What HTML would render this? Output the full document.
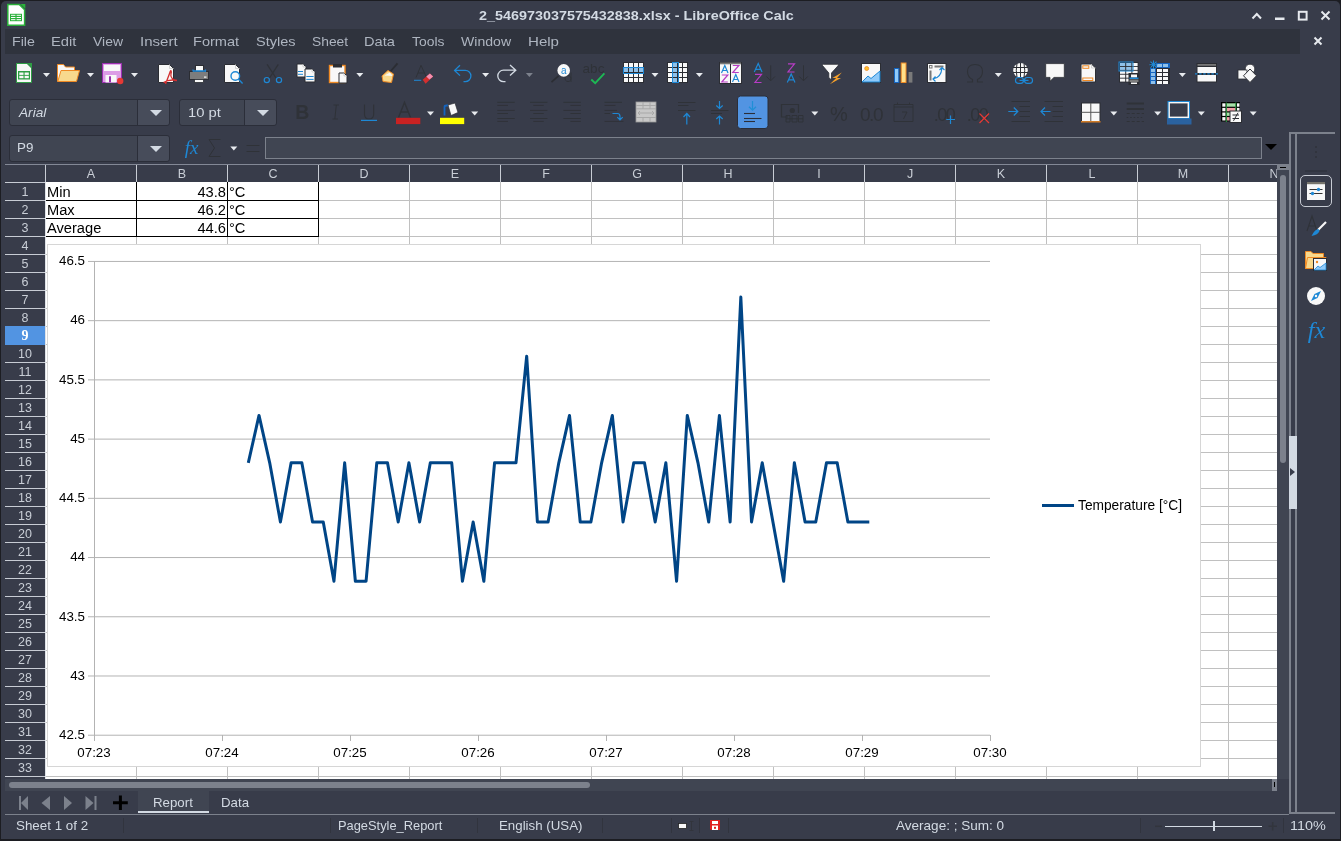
<!DOCTYPE html><html><head><meta charset="utf-8"><style>
*{margin:0;padding:0;box-sizing:border-box}
html,body{width:1341px;height:841px;overflow:hidden;background:#1c1d22}
body{position:relative;font-family:"Liberation Sans",sans-serif;-webkit-font-smoothing:antialiased}
.t{will-change:transform}
.a{position:absolute}
.t{position:absolute;white-space:nowrap;line-height:1}
.ui{font-size:13px;color:#d3dae3}
.menu{font-size:13px;color:#b9c0ca}
.hdr{font-size:12.5px;color:#c9ced6}
.cell{font-size:14.67px;color:#000}
.ch{font-size:13.33px;color:#000}
svg{position:absolute;overflow:visible}
</style></head><body>
<div class="a" style="left:1px;top:1px;width:1339px;height:838px;background:#383c4a;border-radius:5px 5px 0 0"></div>
<div class="a" style="left:5px;top:29px;width:1295px;height:25px;background:#2f333d"></div>
<div class="t" style="left:478.8px;top:10.28px;font-size:12.43px;font-weight:bold;font-style:normal;color:#d3dae3;transform-origin:0 0;transform:scaleX(1.1565)">2_546973037575432838.xlsx - LibreOffice Calc</div>
<div class="t" style="left:12.27px;top:36.26px;font-size:12.57px;font-weight:normal;font-style:normal;color:#aeb5c0;transform-origin:0 0;transform:scaleX(1.1321)">File</div>
<div class="t" style="left:51.03px;top:36.26px;font-size:12.57px;font-weight:normal;font-style:normal;color:#aeb5c0;transform-origin:0 0;transform:scaleX(1.1722)">Edit</div>
<div class="t" style="left:93.0px;top:36.26px;font-size:12.57px;font-weight:normal;font-style:normal;color:#aeb5c0;transform-origin:0 0;transform:scaleX(1.1099)">View</div>
<div class="t" style="left:139.8px;top:36.26px;font-size:12.57px;font-weight:normal;font-style:normal;color:#aeb5c0;transform-origin:0 0;transform:scaleX(1.1963)">Insert</div>
<div class="t" style="left:193.04px;top:36.26px;font-size:12.57px;font-weight:normal;font-style:normal;color:#aeb5c0;transform-origin:0 0;transform:scaleX(1.1605)">Format</div>
<div class="t" style="left:256.0px;top:36.26px;font-size:12.57px;font-weight:normal;font-style:normal;color:#aeb5c0;transform-origin:0 0;transform:scaleX(1.1583)">Styles</div>
<div class="t" style="left:312.3px;top:36.26px;font-size:12.57px;font-weight:normal;font-style:normal;color:#aeb5c0;transform-origin:0 0;transform:scaleX(1.1008)">Sheet</div>
<div class="t" style="left:364.23px;top:36.26px;font-size:12.57px;font-weight:normal;font-style:normal;color:#aeb5c0;transform-origin:0 0;transform:scaleX(1.1664)">Data</div>
<div class="t" style="left:412.0px;top:36.26px;font-size:12.57px;font-weight:normal;font-style:normal;color:#aeb5c0;transform-origin:0 0;transform:scaleX(1.1052)">Tools</div>
<div class="t" style="left:461.1px;top:36.26px;font-size:12.57px;font-weight:normal;font-style:normal;color:#aeb5c0;transform-origin:0 0;transform:scaleX(1.1204)">Window</div>
<div class="t" style="left:527.7px;top:36.26px;font-size:12.57px;font-weight:normal;font-style:normal;color:#aeb5c0;transform-origin:0 0;transform:scaleX(1.1992)">Help</div>
<div class="a" style="left:9px;top:99px;width:161px;height:27px;background:#404552;border:1px solid #2b2e39;border-radius:3px"></div>
<div class="a" style="left:137px;top:100px;width:32px;height:25px;background:#474c5a;border-left:1px solid #2b2e39;border-radius:0 3px 3px 0"></div>
<svg style="left:149.5px;top:109.5px" width="12" height="7"><path d="M0 0H12L6 6Z" fill="#d3dae3"/></svg>
<div class="t" style="left:18.94px;top:105.89px;font-size:13.13px;font-weight:normal;font-style:italic;color:#d3dae3;transform-origin:0 0;transform:scaleX(1.0409)">Arial</div>
<div class="a" style="left:179px;top:99px;width:98px;height:27px;background:#404552;border:1px solid #2b2e39;border-radius:3px"></div>
<div class="a" style="left:244px;top:100px;width:32px;height:25px;background:#474c5a;border-left:1px solid #2b2e39;border-radius:0 3px 3px 0"></div>
<svg style="left:256.5px;top:109.5px" width="12" height="7"><path d="M0 0H12L6 6Z" fill="#d3dae3"/></svg>
<div class="t" style="left:187.77px;top:105.89px;font-size:13.13px;font-weight:normal;font-style:normal;color:#d3dae3;transform-origin:0 0;transform:scaleX(1.128)">10 pt</div>
<div class="a" style="left:9px;top:135px;width:161px;height:27px;background:#404552;border:1px solid #2b2e39;border-radius:3px"></div>
<div class="a" style="left:137px;top:136px;width:32px;height:25px;background:#474c5a;border-left:1px solid #2b2e39;border-radius:0 3px 3px 0"></div>
<svg style="left:149.5px;top:145.5px" width="12" height="7"><path d="M0 0H12L6 6Z" fill="#d3dae3"/></svg>
<div class="t" style="left:17.24px;top:142.46px;font-size:12.57px;font-weight:normal;font-style:normal;color:#d3dae3;transform-origin:0 0;transform:scaleX(1.064)">P9</div>
<div class="a" style="left:265px;top:137px;width:997px;height:22px;background:#404552;border:1px solid #7c818c"></div>
<svg style="left:1265px;top:144px" width="12" height="7"><path d="M0 0H12L6 6Z" fill="#000"/></svg>
<div class="a" style="left:46px;top:182px;width:1231px;height:597px;background:#fff"></div>
<div class="a" style="left:136px;top:182px;width:1px;height:597px;background:#c0c0c0"></div>
<div class="a" style="left:227px;top:182px;width:1px;height:597px;background:#c0c0c0"></div>
<div class="a" style="left:318px;top:182px;width:1px;height:597px;background:#c0c0c0"></div>
<div class="a" style="left:409px;top:182px;width:1px;height:597px;background:#c0c0c0"></div>
<div class="a" style="left:500px;top:182px;width:1px;height:597px;background:#c0c0c0"></div>
<div class="a" style="left:591px;top:182px;width:1px;height:597px;background:#c0c0c0"></div>
<div class="a" style="left:682px;top:182px;width:1px;height:597px;background:#c0c0c0"></div>
<div class="a" style="left:773px;top:182px;width:1px;height:597px;background:#c0c0c0"></div>
<div class="a" style="left:864px;top:182px;width:1px;height:597px;background:#c0c0c0"></div>
<div class="a" style="left:955px;top:182px;width:1px;height:597px;background:#c0c0c0"></div>
<div class="a" style="left:1046px;top:182px;width:1px;height:597px;background:#c0c0c0"></div>
<div class="a" style="left:1137px;top:182px;width:1px;height:597px;background:#c0c0c0"></div>
<div class="a" style="left:1228px;top:182px;width:1px;height:597px;background:#c0c0c0"></div>
<div class="a" style="left:46px;top:200px;width:1231px;height:1px;background:#c0c0c0"></div>
<div class="a" style="left:46px;top:218px;width:1231px;height:1px;background:#c0c0c0"></div>
<div class="a" style="left:46px;top:236px;width:1231px;height:1px;background:#c0c0c0"></div>
<div class="a" style="left:46px;top:254px;width:1231px;height:1px;background:#c0c0c0"></div>
<div class="a" style="left:46px;top:272px;width:1231px;height:1px;background:#c0c0c0"></div>
<div class="a" style="left:46px;top:290px;width:1231px;height:1px;background:#c0c0c0"></div>
<div class="a" style="left:46px;top:308px;width:1231px;height:1px;background:#c0c0c0"></div>
<div class="a" style="left:46px;top:326px;width:1231px;height:1px;background:#c0c0c0"></div>
<div class="a" style="left:46px;top:344px;width:1231px;height:1px;background:#c0c0c0"></div>
<div class="a" style="left:46px;top:362px;width:1231px;height:1px;background:#c0c0c0"></div>
<div class="a" style="left:46px;top:380px;width:1231px;height:1px;background:#c0c0c0"></div>
<div class="a" style="left:46px;top:398px;width:1231px;height:1px;background:#c0c0c0"></div>
<div class="a" style="left:46px;top:416px;width:1231px;height:1px;background:#c0c0c0"></div>
<div class="a" style="left:46px;top:434px;width:1231px;height:1px;background:#c0c0c0"></div>
<div class="a" style="left:46px;top:452px;width:1231px;height:1px;background:#c0c0c0"></div>
<div class="a" style="left:46px;top:470px;width:1231px;height:1px;background:#c0c0c0"></div>
<div class="a" style="left:46px;top:488px;width:1231px;height:1px;background:#c0c0c0"></div>
<div class="a" style="left:46px;top:506px;width:1231px;height:1px;background:#c0c0c0"></div>
<div class="a" style="left:46px;top:524px;width:1231px;height:1px;background:#c0c0c0"></div>
<div class="a" style="left:46px;top:542px;width:1231px;height:1px;background:#c0c0c0"></div>
<div class="a" style="left:46px;top:560px;width:1231px;height:1px;background:#c0c0c0"></div>
<div class="a" style="left:46px;top:578px;width:1231px;height:1px;background:#c0c0c0"></div>
<div class="a" style="left:46px;top:596px;width:1231px;height:1px;background:#c0c0c0"></div>
<div class="a" style="left:46px;top:614px;width:1231px;height:1px;background:#c0c0c0"></div>
<div class="a" style="left:46px;top:632px;width:1231px;height:1px;background:#c0c0c0"></div>
<div class="a" style="left:46px;top:650px;width:1231px;height:1px;background:#c0c0c0"></div>
<div class="a" style="left:46px;top:668px;width:1231px;height:1px;background:#c0c0c0"></div>
<div class="a" style="left:46px;top:686px;width:1231px;height:1px;background:#c0c0c0"></div>
<div class="a" style="left:46px;top:704px;width:1231px;height:1px;background:#c0c0c0"></div>
<div class="a" style="left:46px;top:722px;width:1231px;height:1px;background:#c0c0c0"></div>
<div class="a" style="left:46px;top:740px;width:1231px;height:1px;background:#c0c0c0"></div>
<div class="a" style="left:46px;top:758px;width:1231px;height:1px;background:#c0c0c0"></div>
<div class="a" style="left:46px;top:776px;width:1231px;height:1px;background:#c0c0c0"></div>
<div class="a" style="left:5px;top:164px;width:1272px;height:1px;background:#838896"></div>
<div class="a" style="left:45px;top:165px;width:1px;height:17px;background:#c8ccd4"></div>
<div class="a" style="left:136px;top:165px;width:1px;height:17px;background:#c8ccd4"></div>
<div class="a" style="left:227px;top:165px;width:1px;height:17px;background:#c8ccd4"></div>
<div class="a" style="left:318px;top:165px;width:1px;height:17px;background:#c8ccd4"></div>
<div class="a" style="left:409px;top:165px;width:1px;height:17px;background:#c8ccd4"></div>
<div class="a" style="left:500px;top:165px;width:1px;height:17px;background:#c8ccd4"></div>
<div class="a" style="left:591px;top:165px;width:1px;height:17px;background:#c8ccd4"></div>
<div class="a" style="left:682px;top:165px;width:1px;height:17px;background:#c8ccd4"></div>
<div class="a" style="left:773px;top:165px;width:1px;height:17px;background:#c8ccd4"></div>
<div class="a" style="left:864px;top:165px;width:1px;height:17px;background:#c8ccd4"></div>
<div class="a" style="left:955px;top:165px;width:1px;height:17px;background:#c8ccd4"></div>
<div class="a" style="left:1046px;top:165px;width:1px;height:17px;background:#c8ccd4"></div>
<div class="a" style="left:1137px;top:165px;width:1px;height:17px;background:#c8ccd4"></div>
<div class="a" style="left:1228px;top:165px;width:1px;height:17px;background:#c8ccd4"></div>
<div class="t hdr" style="left:81px;width:20px;text-align:center;top:168px">A</div>
<div class="t hdr" style="left:172px;width:20px;text-align:center;top:168px">B</div>
<div class="t hdr" style="left:263px;width:20px;text-align:center;top:168px">C</div>
<div class="t hdr" style="left:354px;width:20px;text-align:center;top:168px">D</div>
<div class="t hdr" style="left:445px;width:20px;text-align:center;top:168px">E</div>
<div class="t hdr" style="left:536px;width:20px;text-align:center;top:168px">F</div>
<div class="t hdr" style="left:627px;width:20px;text-align:center;top:168px">G</div>
<div class="t hdr" style="left:718px;width:20px;text-align:center;top:168px">H</div>
<div class="t hdr" style="left:809px;width:20px;text-align:center;top:168px">I</div>
<div class="t hdr" style="left:900px;width:20px;text-align:center;top:168px">J</div>
<div class="t hdr" style="left:991px;width:20px;text-align:center;top:168px">K</div>
<div class="t hdr" style="left:1082px;width:20px;text-align:center;top:168px">L</div>
<div class="t hdr" style="left:1173px;width:20px;text-align:center;top:168px">M</div>
<div class="t hdr" style="left:1264px;width:20px;text-align:center;top:168px">N</div>
<div class="a" style="left:5px;top:182px;width:40px;height:1px;background:#c8ccd4"></div>
<div class="a" style="left:5px;top:200px;width:40px;height:1px;background:#c8ccd4"></div>
<div class="a" style="left:5px;top:218px;width:40px;height:1px;background:#c8ccd4"></div>
<div class="a" style="left:5px;top:236px;width:40px;height:1px;background:#c8ccd4"></div>
<div class="a" style="left:5px;top:254px;width:40px;height:1px;background:#c8ccd4"></div>
<div class="a" style="left:5px;top:272px;width:40px;height:1px;background:#c8ccd4"></div>
<div class="a" style="left:5px;top:290px;width:40px;height:1px;background:#c8ccd4"></div>
<div class="a" style="left:5px;top:308px;width:40px;height:1px;background:#c8ccd4"></div>
<div class="a" style="left:5px;top:326px;width:40px;height:1px;background:#c8ccd4"></div>
<div class="a" style="left:5px;top:344px;width:40px;height:1px;background:#c8ccd4"></div>
<div class="a" style="left:5px;top:362px;width:40px;height:1px;background:#c8ccd4"></div>
<div class="a" style="left:5px;top:380px;width:40px;height:1px;background:#c8ccd4"></div>
<div class="a" style="left:5px;top:398px;width:40px;height:1px;background:#c8ccd4"></div>
<div class="a" style="left:5px;top:416px;width:40px;height:1px;background:#c8ccd4"></div>
<div class="a" style="left:5px;top:434px;width:40px;height:1px;background:#c8ccd4"></div>
<div class="a" style="left:5px;top:452px;width:40px;height:1px;background:#c8ccd4"></div>
<div class="a" style="left:5px;top:470px;width:40px;height:1px;background:#c8ccd4"></div>
<div class="a" style="left:5px;top:488px;width:40px;height:1px;background:#c8ccd4"></div>
<div class="a" style="left:5px;top:506px;width:40px;height:1px;background:#c8ccd4"></div>
<div class="a" style="left:5px;top:524px;width:40px;height:1px;background:#c8ccd4"></div>
<div class="a" style="left:5px;top:542px;width:40px;height:1px;background:#c8ccd4"></div>
<div class="a" style="left:5px;top:560px;width:40px;height:1px;background:#c8ccd4"></div>
<div class="a" style="left:5px;top:578px;width:40px;height:1px;background:#c8ccd4"></div>
<div class="a" style="left:5px;top:596px;width:40px;height:1px;background:#c8ccd4"></div>
<div class="a" style="left:5px;top:614px;width:40px;height:1px;background:#c8ccd4"></div>
<div class="a" style="left:5px;top:632px;width:40px;height:1px;background:#c8ccd4"></div>
<div class="a" style="left:5px;top:650px;width:40px;height:1px;background:#c8ccd4"></div>
<div class="a" style="left:5px;top:668px;width:40px;height:1px;background:#c8ccd4"></div>
<div class="a" style="left:5px;top:686px;width:40px;height:1px;background:#c8ccd4"></div>
<div class="a" style="left:5px;top:704px;width:40px;height:1px;background:#c8ccd4"></div>
<div class="a" style="left:5px;top:722px;width:40px;height:1px;background:#c8ccd4"></div>
<div class="a" style="left:5px;top:740px;width:40px;height:1px;background:#c8ccd4"></div>
<div class="a" style="left:5px;top:758px;width:40px;height:1px;background:#c8ccd4"></div>
<div class="a" style="left:5px;top:776px;width:40px;height:1px;background:#c8ccd4"></div>
<div class="t hdr" style="left:5px;width:40px;text-align:center;top:186px;color:#c9ced6">1</div>
<div class="t hdr" style="left:5px;width:40px;text-align:center;top:204px;color:#c9ced6">2</div>
<div class="t hdr" style="left:5px;width:40px;text-align:center;top:222px;color:#c9ced6">3</div>
<div class="t hdr" style="left:5px;width:40px;text-align:center;top:240px;color:#c9ced6">4</div>
<div class="t hdr" style="left:5px;width:40px;text-align:center;top:258px;color:#c9ced6">5</div>
<div class="t hdr" style="left:5px;width:40px;text-align:center;top:276px;color:#c9ced6">6</div>
<div class="t hdr" style="left:5px;width:40px;text-align:center;top:294px;color:#c9ced6">7</div>
<div class="t hdr" style="left:5px;width:40px;text-align:center;top:312px;color:#c9ced6">8</div>
<div class="a" style="left:5px;top:326px;width:41px;height:19px;background:#5294e2"></div>
<div class="t hdr" style="left:5px;width:40px;text-align:center;top:329px;color:#fff;font-weight:bold;font-family:'Liberation Serif',serif;font-size:14px">9</div>
<div class="t hdr" style="left:5px;width:40px;text-align:center;top:348px;color:#c9ced6">10</div>
<div class="t hdr" style="left:5px;width:40px;text-align:center;top:366px;color:#c9ced6">11</div>
<div class="t hdr" style="left:5px;width:40px;text-align:center;top:384px;color:#c9ced6">12</div>
<div class="t hdr" style="left:5px;width:40px;text-align:center;top:402px;color:#c9ced6">13</div>
<div class="t hdr" style="left:5px;width:40px;text-align:center;top:420px;color:#c9ced6">14</div>
<div class="t hdr" style="left:5px;width:40px;text-align:center;top:438px;color:#c9ced6">15</div>
<div class="t hdr" style="left:5px;width:40px;text-align:center;top:456px;color:#c9ced6">16</div>
<div class="t hdr" style="left:5px;width:40px;text-align:center;top:474px;color:#c9ced6">17</div>
<div class="t hdr" style="left:5px;width:40px;text-align:center;top:492px;color:#c9ced6">18</div>
<div class="t hdr" style="left:5px;width:40px;text-align:center;top:510px;color:#c9ced6">19</div>
<div class="t hdr" style="left:5px;width:40px;text-align:center;top:528px;color:#c9ced6">20</div>
<div class="t hdr" style="left:5px;width:40px;text-align:center;top:546px;color:#c9ced6">21</div>
<div class="t hdr" style="left:5px;width:40px;text-align:center;top:564px;color:#c9ced6">22</div>
<div class="t hdr" style="left:5px;width:40px;text-align:center;top:582px;color:#c9ced6">23</div>
<div class="t hdr" style="left:5px;width:40px;text-align:center;top:600px;color:#c9ced6">24</div>
<div class="t hdr" style="left:5px;width:40px;text-align:center;top:618px;color:#c9ced6">25</div>
<div class="t hdr" style="left:5px;width:40px;text-align:center;top:636px;color:#c9ced6">26</div>
<div class="t hdr" style="left:5px;width:40px;text-align:center;top:654px;color:#c9ced6">27</div>
<div class="t hdr" style="left:5px;width:40px;text-align:center;top:672px;color:#c9ced6">28</div>
<div class="t hdr" style="left:5px;width:40px;text-align:center;top:690px;color:#c9ced6">29</div>
<div class="t hdr" style="left:5px;width:40px;text-align:center;top:708px;color:#c9ced6">30</div>
<div class="t hdr" style="left:5px;width:40px;text-align:center;top:726px;color:#c9ced6">31</div>
<div class="t hdr" style="left:5px;width:40px;text-align:center;top:744px;color:#c9ced6">32</div>
<div class="t hdr" style="left:5px;width:40px;text-align:center;top:762px;color:#c9ced6">33</div>
<div class="a" style="left:45px;top:182px;width:1px;height:597px;background:#dfe3e8"></div>
<div class="t cell" style="left:47px;top:185px">Min</div>
<div class="t cell" style="left:137px;width:89px;text-align:right;top:185px">43.8</div>
<div class="t cell" style="left:229px;top:185px">°C</div>
<div class="t cell" style="left:47px;top:203px">Max</div>
<div class="t cell" style="left:137px;width:89px;text-align:right;top:203px">46.2</div>
<div class="t cell" style="left:229px;top:203px">°C</div>
<div class="t cell" style="left:47px;top:221px">Average</div>
<div class="t cell" style="left:137px;width:89px;text-align:right;top:221px">44.6</div>
<div class="t cell" style="left:229px;top:221px">°C</div>
<div class="a" style="left:46px;top:200px;width:273px;height:1px;background:#000"></div>
<div class="a" style="left:46px;top:218px;width:273px;height:1px;background:#000"></div>
<div class="a" style="left:46px;top:236px;width:273px;height:1px;background:#000"></div>
<div class="a" style="left:136px;top:182px;width:1px;height:55px;background:#000"></div>
<div class="a" style="left:227px;top:182px;width:1px;height:55px;background:#000"></div>
<div class="a" style="left:318px;top:182px;width:1px;height:55px;background:#000"></div>
<div class="a" style="left:47px;top:244px;width:1154px;height:523px;background:#fff;border:1px solid #d6d6d6"></div>
<svg style="left:0;top:0" width="1341" height="841"><line x1="88" y1="261.45" x2="990" y2="261.45" stroke="#b3b3b3" stroke-width="1"/><line x1="88" y1="320.67" x2="990" y2="320.67" stroke="#b3b3b3" stroke-width="1"/><line x1="88" y1="379.89" x2="990" y2="379.89" stroke="#b3b3b3" stroke-width="1"/><line x1="88" y1="439.11" x2="990" y2="439.11" stroke="#b3b3b3" stroke-width="1"/><line x1="88" y1="498.33" x2="990" y2="498.33" stroke="#b3b3b3" stroke-width="1"/><line x1="88" y1="557.55" x2="990" y2="557.55" stroke="#b3b3b3" stroke-width="1"/><line x1="88" y1="616.77" x2="990" y2="616.77" stroke="#b3b3b3" stroke-width="1"/><line x1="88" y1="675.99" x2="990" y2="675.99" stroke="#b3b3b3" stroke-width="1"/><line x1="88" y1="735.21" x2="990" y2="735.21" stroke="#b3b3b3" stroke-width="1"/><line x1="94.5" y1="261" x2="94.5" y2="741" stroke="#b3b3b3" stroke-width="1"/><line x1="94.5" y1="735" x2="94.5" y2="741" stroke="#b3b3b3" stroke-width="1"/><line x1="222.5" y1="735" x2="222.5" y2="741" stroke="#b3b3b3" stroke-width="1"/><line x1="350.5" y1="735" x2="350.5" y2="741" stroke="#b3b3b3" stroke-width="1"/><line x1="478.5" y1="735" x2="478.5" y2="741" stroke="#b3b3b3" stroke-width="1"/><line x1="606.5" y1="735" x2="606.5" y2="741" stroke="#b3b3b3" stroke-width="1"/><line x1="734.5" y1="735" x2="734.5" y2="741" stroke="#b3b3b3" stroke-width="1"/><line x1="862.5" y1="735" x2="862.5" y2="741" stroke="#b3b3b3" stroke-width="1"/><line x1="990.5" y1="735" x2="990.5" y2="741" stroke="#b3b3b3" stroke-width="1"/><polyline points="248.30,462.80 259.01,415.42 269.71,462.80 280.42,522.02 291.13,462.80 301.84,462.80 312.54,522.02 323.25,522.02 333.96,581.24 344.66,462.80 355.37,581.24 366.08,581.24 376.78,462.80 387.49,462.80 398.20,522.02 408.91,462.80 419.61,522.02 430.32,462.80 441.03,462.80 451.73,462.80 462.44,581.24 473.15,522.02 483.85,581.24 494.56,462.80 505.27,462.80 515.98,462.80 526.68,356.20 537.39,522.02 548.10,522.02 558.80,462.80 569.51,415.42 580.22,522.02 590.92,522.02 601.63,462.80 612.34,415.42 623.05,522.02 633.75,462.80 644.46,462.80 655.17,522.02 665.87,462.80 676.58,581.24 687.29,415.42 697.99,462.80 708.70,522.02 719.41,415.42 730.12,522.02 740.82,296.98 751.53,522.02 762.24,462.80 772.94,522.02 783.65,581.24 794.36,462.80 805.06,522.02 815.77,522.02 826.48,462.80 837.18,462.80 847.89,522.02 858.60,522.02 869.31,522.02" fill="none" stroke="#004586" stroke-width="3" stroke-linejoin="round" stroke-linecap="butt"/><line x1="1042" y1="505.5" x2="1074" y2="505.5" stroke="#004586" stroke-width="3"/></svg>
<div class="t ch" style="left:31px;width:54px;text-align:right;top:254.0px">46.5</div>
<div class="t ch" style="left:31px;width:54px;text-align:right;top:313.2px">46</div>
<div class="t ch" style="left:31px;width:54px;text-align:right;top:372.5px">45.5</div>
<div class="t ch" style="left:31px;width:54px;text-align:right;top:431.8px">45</div>
<div class="t ch" style="left:31px;width:54px;text-align:right;top:491.0px">44.5</div>
<div class="t ch" style="left:31px;width:54px;text-align:right;top:550.2px">44</div>
<div class="t ch" style="left:31px;width:54px;text-align:right;top:609.5px">43.5</div>
<div class="t ch" style="left:31px;width:54px;text-align:right;top:668.8px">43</div>
<div class="t ch" style="left:31px;width:54px;text-align:right;top:728.0px">42.5</div>
<div class="t ch" style="left:64px;width:60px;text-align:center;top:746px">07:23</div>
<div class="t ch" style="left:192px;width:60px;text-align:center;top:746px">07:24</div>
<div class="t ch" style="left:320px;width:60px;text-align:center;top:746px">07:25</div>
<div class="t ch" style="left:448px;width:60px;text-align:center;top:746px">07:26</div>
<div class="t ch" style="left:576px;width:60px;text-align:center;top:746px">07:27</div>
<div class="t ch" style="left:704px;width:60px;text-align:center;top:746px">07:28</div>
<div class="t ch" style="left:832px;width:60px;text-align:center;top:746px">07:29</div>
<div class="t ch" style="left:960px;width:60px;text-align:center;top:746px">07:30</div>
<div class="t ch" style="left:1078px;top:499px;font-size:13.75px">Temperature [°C]</div>
<div class="a" style="left:5px;top:779px;width:1272px;height:12px;background:#404552"></div>
<div class="a" style="left:1272px;top:779px;width:5px;height:12px;background:#7c818c"></div>
<div class="a" style="left:1274px;top:782px;width:1px;height:5px;background:#000"></div>
<div class="a" style="left:9px;top:782px;width:581px;height:6px;background:#7c818c;border-radius:3px"></div>
<div class="a" style="left:138px;top:790px;width:71px;height:23px;background:#404552"></div>
<div class="a" style="left:138px;top:811px;width:71px;height:2px;background:#d3dae3"></div>
<div class="t" style="left:152.51px;top:796.17px;font-size:13.27px;font-weight:normal;font-style:normal;color:#d3dae3;transform-origin:0 0;transform:scaleX(0.9941)">Report</div>
<div class="t" style="left:221.21px;top:796.17px;font-size:13.27px;font-weight:normal;font-style:normal;color:#d3dae3;transform-origin:0 0;transform:scaleX(0.9912)">Data</div>
<div class="a" style="left:5px;top:814px;width:1284px;height:1px;background:#7c818c"></div>
<div class="t" style="left:15.5px;top:820.2px;font-size:12.29px;font-weight:normal;font-style:normal;color:#d3dae3;transform-origin:0 0;transform:scaleX(1.0888)">Sheet 1 of 2</div>
<div class="t" style="left:338.45px;top:820.2px;font-size:12.29px;font-weight:normal;font-style:normal;color:#d3dae3;transform-origin:0 0;transform:scaleX(1.0467)">PageStyle_Report</div>
<div class="t" style="left:498.92px;top:820.2px;font-size:12.29px;font-weight:normal;font-style:normal;color:#d3dae3;transform-origin:0 0;transform:scaleX(1.0824)">English (USA)</div>
<div class="t" style="left:895.9px;top:820.2px;font-size:12.29px;font-weight:normal;font-style:normal;color:#d3dae3;transform-origin:0 0;transform:scaleX(1.1023)">Average: ; Sum: 0</div>
<div class="t" style="left:1290.4px;top:820.2px;font-size:12.29px;font-weight:normal;font-style:normal;color:#d3dae3;transform-origin:0 0;transform:scaleX(1.174)">110%</div>
<div class="a" style="left:1165px;top:826px;width:97px;height:1px;background:#d3dae3"></div>
<div class="a" style="left:1213px;top:821px;width:2px;height:10px;background:#d3dae3"></div>
<div class="a" style="left:1277px;top:165px;width:12px;height:614px;background:#404552"></div>
<div class="a" style="left:1280px;top:175px;width:6px;height:288px;background:#7c818c;border-radius:3px"></div>
<div class="a" style="left:1289px;top:132px;width:46px;height:2px;background:#7c818c"></div>
<div class="a" style="left:1289px;top:132px;width:2px;height:681px;background:#7c818c"></div>
<div class="a" style="left:1295px;top:132px;width:2px;height:681px;background:#7c818c"></div>
<div class="a" style="left:1289px;top:812px;width:46px;height:2px;background:#7c818c"></div>
<div class="a" style="left:1289px;top:436px;width:8px;height:73px;background:#d3dae3"></div>
<svg style="left:1290px;top:468px" width="6" height="8"><path d="M0 0L5 4L0 8Z" fill="#383c4a"/></svg>
<div class="a" style="left:1300px;top:175px;width:32px;height:32px;border:1px solid #c8ccd4;border-radius:5px"></div>
<div class="a" style="left:123px;top:818px;width:1px;height:15px;background:#31343e"></div>
<div class="a" style="left:330px;top:818px;width:1px;height:15px;background:#31343e"></div>
<div class="a" style="left:477px;top:818px;width:1px;height:15px;background:#31343e"></div>
<div class="a" style="left:602px;top:818px;width:1px;height:15px;background:#31343e"></div>
<div class="a" style="left:671px;top:818px;width:1px;height:15px;background:#31343e"></div>
<div class="a" style="left:699px;top:818px;width:1px;height:15px;background:#31343e"></div>
<div class="a" style="left:728px;top:818px;width:1px;height:15px;background:#31343e"></div>
<div class="a" style="left:1140px;top:818px;width:1px;height:15px;background:#31343e"></div>
<div class="a" style="left:1283px;top:818px;width:1px;height:15px;background:#31343e"></div>
<div class="a" style="left:1277px;top:164px;width:12px;height:6px;background:#7c818c"></div>
<div class="a" style="left:1280px;top:167px;width:6px;height:1px;background:#000"></div>
<div class="a" style="left:1315px;top:146px;width:2px;height:2px;background:#31343e"></div>
<div class="a" style="left:1315px;top:151px;width:2px;height:2px;background:#31343e"></div>
<div class="a" style="left:1315px;top:156px;width:2px;height:2px;background:#31343e"></div>
<svg style="left:0;top:0" width="1341" height="841" viewBox="0 0 1341 841"><path d="M7.8 4.6 H19.5 L24.6 9.7 V25.2 H7.8 Z" fill="#fff" stroke="#2ab03a" stroke-width="1.5"/><path d="M20.5 3.9 H25.3 V8.7 Z" fill="#2ab03a"/><rect x="10" y="13.8" width="12" height="7.4" fill="#2ab03a"/><path d="M11 15.3 H21 M11 17.5 H21 M11 19.7 H21" stroke="#fff" stroke-width="1"/><path d="M16 14 V21" stroke="#2ab03a" stroke-width="1.2"/><path d="M1252.5 18.5 L1256.8 14 L1261 18.5" stroke="#e6e9ee" stroke-width="2" fill="none"/><rect x="1275" y="17.5" width="9.5" height="2.5" fill="#e6e9ee"/><rect x="1298.8" y="11.8" width="7.8" height="7.8" fill="none" stroke="#e6e9ee" stroke-width="2"/><path d="M1321.5 11.5 L1329.5 19.5 M1329.5 11.5 L1321.5 19.5" stroke="#e6e9ee" stroke-width="2"/><path d="M1314.5 37.5 L1321.5 44.5 M1321.5 37.5 L1314.5 44.5" stroke="#e6e9ee" stroke-width="2"/><path d="M16.5 63.5 H27 L31.5 68 V82.5 H16.5 Z" fill="#f8f8f8" stroke="#2e9e44"/><path d="M27 63 H32 V68 Z" fill="#2e9e44"/><rect x="18" y="71" width="12" height="8.5" fill="#2e9e44"/><rect x="19.3" y="72.5" width="4.2" height="2.4" fill="#f8f8f8"/><rect x="24.6" y="72.5" width="4.2" height="2.4" fill="#f8f8f8"/><rect x="19.3" y="75.8" width="4.2" height="2.4" fill="#f8f8f8"/><rect x="24.6" y="75.8" width="4.2" height="2.4" fill="#f8f8f8"/><path d="M43.0 73 H50.0 L46.5 77 Z" fill="#e8ebef"/><path d="M57.5 81.5 V64.5 H63.5 L65.5 67 H74.5 V71" fill="#f8f8f8" stroke="#f08a24"/><path d="M57.8 81.5 L61 70.5 H79.5 L76.5 81.5 Z" fill="#f8d98e" stroke="#f08a24" stroke-linejoin="round"/><path d="M87.0 73 H94.0 L90.5 77 Z" fill="#e8ebef"/><rect x="102.5" y="63.5" width="19" height="19" fill="#dc9ce6" stroke="#9b2fb0"/><rect x="104" y="64.8" width="16" height="6.2" fill="#f8f8f8"/><rect x="105.5" y="75" width="11" height="7.5" fill="#f8f8f8"/><rect x="109" y="76.3" width="2" height="6" fill="#9b2fb0"/><circle cx="120.2" cy="81" r="3.2" fill="#e53935"/><path d="M131.0 73 H138.0 L134.5 77 Z" fill="#e8ebef"/><path d="M158.5 64.5 H169.5 L173.5 68.5 V82.5 H158.5 Z" fill="#f8f8f8" stroke="#2b2d33" stroke-width="1"/><path d="M169.5 64.5 V68.5 H173.5" fill="none" stroke="#c8c8c8" stroke-width=".8"/><path d="M165.5 84 C167.5 79 169.5 74 170.3 71.3 C171 69.8 171.8 71.5 171 73.8 C170 77 172.5 80 177 80.5 C172 79.5 167.5 80 163.5 82.5" stroke="#d32f2f" stroke-width="1.3" fill="none"/><rect x="195.5" y="65.5" width="8" height="6" fill="#f8f8f8" stroke="#2b2d33"/><rect x="189.5" y="71.5" width="19" height="8" fill="#7d7d7d" stroke="#2b2d33"/><path d="M193 71 H206" stroke="#1e88d5" stroke-width="1.6"/><path d="M193 69.5 V71.5 M205.5 69.5 V71.5" stroke="#1e88d5" stroke-width="1.2"/><rect x="204" y="76.5" width="2.5" height="1.2" fill="#f8f8f8"/><rect x="194.5" y="79.5" width="9" height="3" fill="#f8f8f8" stroke="#2b2d33" stroke-width=".8"/><path d="M224.5 64.5 H235.5 L239.5 68.5 V82.5 H224.5 Z" fill="#f8f8f8" stroke="#2b2d33" stroke-width="1"/><path d="M235.5 64.5 V68.5 H239.5" fill="none" stroke="#c8c8c8" stroke-width=".8"/><circle cx="235.3" cy="76" r="4.3" fill="#f8f8f8" stroke="#1e88d5" stroke-width="1.4"/><path d="M238.3 79 L242.6 83.6" stroke="#1e88d5" stroke-width="1.4"/><path d="M267.1 64.3 L276 78 M278.3 64.3 L269.5 78" stroke="#2f3238" stroke-width="1.3" fill="none"/><circle cx="266.8" cy="80.1" r="2.6" fill="none" stroke="#1e88d5" stroke-width="1.2"/><circle cx="279" cy="80.1" r="2.6" fill="none" stroke="#1e88d5" stroke-width="1.2"/><path d="M297.0 64.0 H303.0 L306.0 67.0 V77.0 H297.0 Z" fill="#f8f8f8" stroke="#2b2d33" stroke-width="1"/><path d="M303.0 64.0 V67.0 H306.0" fill="none" stroke="#c8c8c8" stroke-width=".8"/><path d="M298 71.5 H303 M298 74.3 H303" stroke="#1e88d5" stroke-width="1"/><path d="M305.0 69.0 H312.0 L315.0 72.0 V82.0 H305.0 Z" fill="#f8f8f8" stroke="#2b2d33" stroke-width="1"/><path d="M312.0 69.0 V72.0 H315.0" fill="none" stroke="#c8c8c8" stroke-width=".8"/><path d="M306.3 76.5 H313.6 M306.3 79.4 H313.6" stroke="#1e88d5" stroke-width="1"/><rect x="329.5" y="65.5" width="15.5" height="17" fill="#f8f8f8" stroke="#f08a24" stroke-width="1.4"/><path d="M333 64 H342 V67.5 H333 Z" fill="#2b2d33"/><path d="M339.0 73.0 H344.0 L347.0 76.0 V83.0 H339.0 Z" fill="#f8f8f8" stroke="#2b2d33" stroke-width="1"/><path d="M344.0 73.0 V76.0 H347.0" fill="none" stroke="#c8c8c8" stroke-width=".8"/><path d="M356.3 73 H363.3 L359.8 77 Z" fill="#e8ebef"/><path d="M397.5 63.3 L390 72" stroke="#2b2d33" stroke-width="1.8"/><path d="M388 70.5 L393.5 74 L391.5 82.5 L383 81.5 L382 76 Z" fill="#f8d98e" stroke="#f08a24" stroke-width="1"/><path d="M384.5 75.5 L390 72.5 L392.5 76 Z" fill="#f8f8f8"/><path d="M416 77.5 L421 65.3 L426.5 77.5 M418 73 H424.5" stroke="#2f3238" stroke-width="1" fill="none"/><path d="M414 80.3 H421.2" stroke="#1e88d5" stroke-width="1"/><path d="M422.7 79.8 L429.9 73.5 L433.1 76.4 L425.6 83.7 Z" fill="#d32f2f"/><path d="M426.3 76.6 L429.9 73.5 L433.1 76.4 L429.5 79.6 Z" fill="#f48fb1"/><path d="M460 65.3 L454.6 70.4 L460 75.6 M455 70.4 H465.3 A5.6 5.6 0 0 1 465.3 81.6 H463.5" stroke="#1e88d5" stroke-width="1.3" fill="none"/><path d="M482.1 73 H489.1 L485.6 77 Z" fill="#e8ebef"/><path d="M510 65 L515.8 70.2 L510 75.6 M515.5 70.2 H503.5 A5.7 5.7 0 0 0 503.5 81.6 H505.5" stroke="#d3dae3" stroke-width="1.3" fill="none"/><path d="M525.9 73 H532.9 L529.4 77 Z" fill="#7c818c"/><path d="M551.5 82.2 L558.5 75.8" stroke="#2b2d33" stroke-width="1.6"/><path d="M571 72.5 V82 M571 78.5 A3 3 0 1 0 571 78.6" stroke="#2f3238" stroke-width="1" fill="none"/><circle cx="563.7" cy="70.4" r="6.3" fill="#f8f8f8"/><text x="563.7" y="73.8" font-size="10" text-anchor="middle" fill="#1e88d5" font-family="Liberation Sans">a</text><text x="593.5" y="73" font-size="13.5" text-anchor="middle" fill="#2f3238" font-family="Liberation Sans">abc</text><path d="M591.3 79.5 L595.2 83.2 L604.4 73.3" stroke="#1db954" stroke-width="1.8" fill="none"/><rect x="623" y="62" width="21" height="21" fill="#2b2d33"/><rect x="624" y="63" width="4" height="4" fill="#f8f8f8"/><rect x="629" y="63" width="4" height="4" fill="#f8f8f8"/><rect x="634" y="63" width="4" height="4" fill="#f8f8f8"/><rect x="639" y="63" width="4" height="4" fill="#f8f8f8"/><rect x="624" y="68" width="4" height="4" fill="#8fc1ea"/><rect x="629" y="68" width="4" height="4" fill="#8fc1ea"/><rect x="634" y="68" width="4" height="4" fill="#8fc1ea"/><rect x="639" y="68" width="4" height="4" fill="#8fc1ea"/><rect x="624" y="73" width="4" height="4" fill="#f8f8f8"/><rect x="629" y="73" width="4" height="4" fill="#f8f8f8"/><rect x="634" y="73" width="4" height="4" fill="#f8f8f8"/><rect x="639" y="73" width="4" height="4" fill="#f8f8f8"/><rect x="624" y="78" width="4" height="4" fill="#f8f8f8"/><rect x="629" y="78" width="4" height="4" fill="#f8f8f8"/><rect x="634" y="78" width="4" height="4" fill="#f8f8f8"/><rect x="639" y="78" width="4" height="4" fill="#f8f8f8"/><rect x="623.5" y="67.5" width="20" height="6" fill="none" stroke="#1e88d5" stroke-width="1"/><path d="M651.5 73 H658.5 L655 77 Z" fill="#e8ebef"/><rect x="667" y="62" width="21" height="21" fill="#2b2d33"/><rect x="668" y="63" width="4" height="4" fill="#f8f8f8"/><rect x="673" y="63" width="4" height="4" fill="#8fc1ea"/><rect x="678" y="63" width="4" height="4" fill="#f8f8f8"/><rect x="683" y="63" width="4" height="4" fill="#f8f8f8"/><rect x="668" y="68" width="4" height="4" fill="#f8f8f8"/><rect x="673" y="68" width="4" height="4" fill="#8fc1ea"/><rect x="678" y="68" width="4" height="4" fill="#f8f8f8"/><rect x="683" y="68" width="4" height="4" fill="#f8f8f8"/><rect x="668" y="73" width="4" height="4" fill="#f8f8f8"/><rect x="673" y="73" width="4" height="4" fill="#8fc1ea"/><rect x="678" y="73" width="4" height="4" fill="#f8f8f8"/><rect x="683" y="73" width="4" height="4" fill="#f8f8f8"/><rect x="668" y="78" width="4" height="4" fill="#f8f8f8"/><rect x="673" y="78" width="4" height="4" fill="#8fc1ea"/><rect x="678" y="78" width="4" height="4" fill="#f8f8f8"/><rect x="683" y="78" width="4" height="4" fill="#f8f8f8"/><rect x="672.5" y="62.5" width="6" height="20" fill="none" stroke="#1e88d5" stroke-width="1"/><path d="M695.9 73 H702.9 L699.4 77 Z" fill="#e8ebef"/><rect x="719.5" y="62.5" width="22" height="21" fill="#f8f8f8" stroke="#2b2d33"/><rect x="720" y="62.5" width="21" height="1.8" fill="#777"/><path d="M730.5 64 V83" stroke="#2b2d33" stroke-width="1"/><path d="M721.5 73 L724.8 65.5 L728 73 M722.6 70.5 H727" stroke="#1e88d5" stroke-width="1.2" fill="none"/><path d="M721.8 75 H727.8 L721.8 82 H727.8" stroke="#b73cc5" stroke-width="1.2" fill="none"/><path d="M732.8 65.5 H738.8 L732.8 72.5 H738.8" stroke="#b73cc5" stroke-width="1.2" fill="none"/><path d="M732.5 82 L735.8 74.5 L739 82 M733.6 79.5 H738" stroke="#1e88d5" stroke-width="1.2" fill="none"/><path d="M754.3 72 L758.2 63.5 L762 72 M755.6 69.3 H760.8" stroke="#1e88d5" stroke-width="1.2" fill="none"/><path d="M755 74.3 H761.5 L755 82.5 H761.5" stroke="#b73cc5" stroke-width="1.2" fill="none"/><path d="M770.7 65.3 V80.6 M766.5 76.5 L770.7 80.8 L774.9 76.5" stroke="#2f3238" stroke-width="1" fill="none"/><path d="M788 63.8 H794.5 L788 72 H794.5" stroke="#b73cc5" stroke-width="1.2" fill="none"/><path d="M787.3 82.5 L791.2 74 L795 82.5 M788.6 79.8 H793.8" stroke="#1e88d5" stroke-width="1.2" fill="none"/><path d="M803.5 65.3 V80.6 M799.3 76.5 L803.5 80.8 L807.7 76.5" stroke="#2f3238" stroke-width="1" fill="none"/><path d="M822.5 65.5 Q822 64.3 823.5 64.3 H837.5 Q839 64.3 838 65.8 L831.5 73 V80 L828.8 77.5 V73 Z" fill="#f8f8f8" stroke="#2b2d33" stroke-width=".8"/><path d="M841.8 72.5 L832.3 78 H836.2 L829.8 84.2 L841 78 H837 Z" fill="#f5a02a"/><rect x="861.5" y="63.5" width="19" height="19" fill="#f8f8f8" stroke="#2b2d33"/><circle cx="866.7" cy="68.5" r="2" fill="#fbc02d" stroke="#f08a24" stroke-width=".8"/><path d="M862 82 L868 76 L871 78.5 L880 71 V82 Z" fill="#90caf9" stroke="#1e88d5" stroke-width="1"/><rect x="894.5" y="68.5" width="4.3" height="14" fill="#90caf9" stroke="#1565c0"/><rect x="901.2" y="63" width="4.8" height="19.5" fill="#ffe08a" stroke="#f08a24"/><rect x="908.6" y="72" width="3.8" height="10.6" fill="#7a7a7a"/><rect x="927.5" y="63.5" width="18.5" height="19" fill="#f8f8f8" stroke="#2b2d33"/><rect x="929.5" y="65.5" width="2.5" height="2.5" fill="none" stroke="#777" stroke-width="1"/><rect x="934.5" y="65.5" width="9" height="2" fill="#777"/><rect x="929.5" y="70.5" width="2" height="10" fill="#777"/><path d="M933 79 Q941 78 942 68 M939.5 70 L942 67.5 L944.5 70 M935.5 76.5 L933 79 L935.5 81.5" stroke="#1e88d5" stroke-width="1.2" fill="none"/><path d="M967 82 H972.5 V79.5 Q967.5 77 967.5 71.5 Q967.5 64.5 975 64.5 Q982.5 64.5 982.5 71.5 Q982.5 77 977.5 79.5 V82 H983" stroke="#2f3238" stroke-width="1.1" fill="none"/><path d="M994.8 73 H1001.8 L998.3 77 Z" fill="#e8ebef"/><circle cx="1020.5" cy="70.3" r="7.3" fill="#f8f8f8"/><path d="M1013 67.5 H1028 M1013 72.5 H1028 M1017 63.5 Q1015.5 70 1017 77.5 M1024 63.5 Q1025.5 70 1024 77.5 M1020.5 63 V77.5" stroke="#2b2d33" stroke-width="1" fill="none"/><rect x="1015.5" y="77.5" width="8" height="5.8" rx="2.8" fill="none" stroke="#1e88d5" stroke-width="1.2"/><rect x="1024.5" y="77.5" width="8" height="5.8" rx="2.8" fill="none" stroke="#1e88d5" stroke-width="1.2"/><path d="M1019.5 80.4 H1028.5" stroke="#1e88d5" stroke-width="1.2"/><path d="M1045.7 63.6 H1064.3 V77.4 H1054 L1050 81.3 V77.4 H1045.7 Z" fill="#f8f8f8" stroke="#2b2d33" stroke-width=".8"/><path d="M1081.0 64.0 H1091.5 L1095.5 68.0 V82.0 H1081.0 Z" fill="#f8f8f8" stroke="#2b2d33" stroke-width="1"/><path d="M1091.5 64.0 V68.0 H1095.5" fill="none" stroke="#c8c8c8" stroke-width=".8"/><rect x="1082.8" y="65.8" width="6" height="2.5" fill="none" stroke="#f08a24" stroke-width="1"/><rect x="1082.8" y="78" width="10" height="2.5" fill="none" stroke="#f08a24" stroke-width="1"/><rect x="1119" y="62" width="19.5" height="20.5" fill="#2b2d33"/><rect x="1120.0" y="63.0" width="5.2" height="3" fill="#8fc1ea"/><rect x="1126.2" y="63.0" width="5.2" height="3" fill="#8fc1ea"/><rect x="1132.4" y="63.0" width="5.2" height="3" fill="#f8f8f8"/><rect x="1120.0" y="66.9" width="5.2" height="3" fill="#8fc1ea"/><rect x="1126.2" y="66.9" width="5.2" height="3" fill="#8fc1ea"/><rect x="1132.4" y="66.9" width="5.2" height="3" fill="#f8f8f8"/><rect x="1120.0" y="70.8" width="5.2" height="3" fill="#f8f8f8"/><rect x="1126.2" y="70.8" width="5.2" height="3" fill="#f8f8f8"/><rect x="1132.4" y="70.8" width="5.2" height="3" fill="#f8f8f8"/><rect x="1120.0" y="74.7" width="5.2" height="3" fill="#f8f8f8"/><rect x="1126.2" y="74.7" width="5.2" height="3" fill="#f8f8f8"/><rect x="1132.4" y="74.7" width="5.2" height="3" fill="#f8f8f8"/><rect x="1120.0" y="78.6" width="5.2" height="3" fill="#f8f8f8"/><rect x="1126.2" y="78.6" width="5.2" height="3" fill="#f8f8f8"/><rect x="1132.4" y="78.6" width="5.2" height="3" fill="#f8f8f8"/><rect x="1119" y="62" width="14" height="9" fill="none" stroke="#1e88d5" stroke-width="1"/><rect x="1128.5" y="73" width="11" height="12" fill="#2b2d33"/><rect x="1131" y="74.5" width="6" height="3" fill="#f8f8f8"/><rect x="1129.5" y="77.5" width="9" height="1.5" fill="#1e88d5"/><rect x="1129.5" y="79.5" width="9" height="2.5" fill="#7d7d7d"/><rect x="1131" y="82.5" width="6" height="1.5" fill="#f8f8f8"/><rect x="1150" y="63" width="20" height="21" fill="#2b2d33"/><rect x="1150" y="68" width="6" height="16" fill="#1565c0"/><rect x="1156" y="63" width="14" height="5" fill="#1565c0"/><rect x="1157" y="69" width="5" height="3" fill="#f8f8f8"/><rect x="1163" y="69" width="5" height="3" fill="#f8f8f8"/><rect x="1151" y="69" width="4" height="3" fill="#8fc1ea"/><rect x="1157" y="73" width="5" height="3" fill="#f8f8f8"/><rect x="1163" y="73" width="5" height="3" fill="#f8f8f8"/><rect x="1151" y="73" width="4" height="3" fill="#8fc1ea"/><rect x="1157" y="77" width="5" height="3" fill="#f8f8f8"/><rect x="1163" y="77" width="5" height="3" fill="#f8f8f8"/><rect x="1151" y="77" width="4" height="3" fill="#8fc1ea"/><rect x="1157" y="81" width="5" height="3" fill="#f8f8f8"/><rect x="1163" y="81" width="5" height="3" fill="#f8f8f8"/><rect x="1151" y="81" width="4" height="3" fill="#8fc1ea"/><rect x="1157" y="64" width="5" height="3" fill="#8fc1ea"/><rect x="1163" y="64" width="5" height="3" fill="#8fc1ea"/><path d="M1153.5 60.5 V69 M1149.5 64.7 H1157.5 M1150.5 61.7 L1156.5 67.7 M1156.5 61.7 L1150.5 67.7" stroke="#1e88d5" stroke-width="1.1"/><path d="M1178.9 73 H1185.9 L1182.4 77 Z" fill="#e8ebef"/><rect x="1196.5" y="63" width="20.5" height="19.5" fill="#2b2d33"/><rect x="1197.5" y="64" width="18.5" height="1.8" fill="#777"/><rect x="1197.5" y="67" width="18.5" height="6" fill="#f8f8f8"/><rect x="1197.5" y="75" width="18.5" height="6.5" fill="#f8f8f8"/><path d="M1195 73.8 H1218" stroke="#1e88d5" stroke-width="1.2" stroke-dasharray="2.5 1.6"/><circle cx="1250" cy="69" r="4.8" fill="#f8f8f8" stroke="#2b2d33" stroke-width=".8"/><rect x="1238" y="70" width="9" height="9" fill="#f8f8f8" stroke="#2b2d33" stroke-width=".8"/><path d="M1250 69 L1256.5 75.8 L1250 82.5 L1243.5 75.8 Z" fill="#f8f8f8" stroke="#2b2d33" stroke-width="1"/><text x="302.2" y="119.2" font-size="19.5" font-weight="bold" text-anchor="middle" fill="#2f3238" font-family="Liberation Sans">B</text><path d="M333.5 105 H339 M332.5 119 H338 M336.3 105 L334.8 119" stroke="#2f3238" stroke-width="1" fill="none"/><path d="M364.5 104.5 V114 Q364.5 119 369 119 Q373.7 119 373.7 114 V104.5" stroke="#2f3238" stroke-width="1.1" fill="none"/><path d="M361 120.4 H377" stroke="#1e88d5" stroke-width="1.2"/><path d="M398.5 117.5 L404.5 102.5 L410.5 117.5 M400.5 112 H408.5" stroke="#2f3238" stroke-width="1.4" fill="none"/><rect x="396" y="117.8" width="24.3" height="6.3" fill="#c92222"/><path d="M427.0 111.5 H434.0 L430.5 115.5 Z" fill="#e8ebef"/><path d="M444.5 115.5 V107 Q444.5 105.5 446.5 105.5 H448" stroke="#1565c0" stroke-width="1.8" fill="none"/><path d="M448 105 L455 103 L458 112.5 L451 115.5 Z" fill="#f8f8f8" stroke="#2b2d33" stroke-width=".7"/><rect x="440" y="117.8" width="24.2" height="6.3" fill="#ffff00"/><path d="M471.2 111.5 H478.2 L474.7 115.5 Z" fill="#e8ebef"/><path d="M497.3 102.3 H514.7" stroke="#2f3238" stroke-width="1"/><path d="M497.3 105.4 H508.0" stroke="#2f3238" stroke-width="1"/><path d="M497.3 110.4 H514.7" stroke="#2f3238" stroke-width="1"/><path d="M497.3 113.5 H508.0" stroke="#2f3238" stroke-width="1"/><path d="M497.3 118.5 H514.7" stroke="#2f3238" stroke-width="1"/><path d="M497.3 121.4 H508.0" stroke="#2f3238" stroke-width="1"/><path d="M530 102.3 H547.4" stroke="#2f3238" stroke-width="1"/><path d="M533.3 105.4 H543.7" stroke="#2f3238" stroke-width="1"/><path d="M530 110.4 H547.4" stroke="#2f3238" stroke-width="1"/><path d="M533.3 113.5 H543.7" stroke="#2f3238" stroke-width="1"/><path d="M530 118.5 H547.4" stroke="#2f3238" stroke-width="1"/><path d="M533.3 121.4 H543.7" stroke="#2f3238" stroke-width="1"/><path d="M563.4 102.3 H580.8" stroke="#2f3238" stroke-width="1"/><path d="M570.4 105.4 H580.8" stroke="#2f3238" stroke-width="1"/><path d="M563.4 110.4 H580.8" stroke="#2f3238" stroke-width="1"/><path d="M570.4 113.5 H580.8" stroke="#2f3238" stroke-width="1"/><path d="M563.4 118.5 H580.8" stroke="#2f3238" stroke-width="1"/><path d="M570.4 121.4 H580.8" stroke="#2f3238" stroke-width="1"/><path d="M604.5 102.3 H622.0" stroke="#2f3238" stroke-width="1"/><path d="M604.5 105.4 H615.5" stroke="#2f3238" stroke-width="1"/><path d="M604.5 110.4 H617.0" stroke="#2f3238" stroke-width="1"/><path d="M604.5 113.5 H610.0" stroke="#2f3238" stroke-width="1"/><path d="M604.5 121.4 H623.5" stroke="#2f3238" stroke-width="1"/><path d="M612.5 113.5 H617.5 Q620 113.5 620 116.5 V119.8 M617.3 117.2 L620 120 L622.7 117.2" stroke="#1e88d5" stroke-width="1.2" fill="none"/><rect x="636" y="102" width="20" height="20" fill="#c8c8c8" stroke="#9a9a9a" stroke-width=".8"/><path d="M636 105.5 H656 M636 108.8 H656 M636 117.5 H656 M643 102 V108.8 M650 102 V108.8 M643 117.5 V122 M650 117.5 V122 M638 113 H654 M640 111 L638 113 L640 115 M652 111 L654 113 L652 115" stroke="#a8a8a8" stroke-width="1" fill="none"/><path d="M678 102.5 H695.5" stroke="#2f3238" stroke-width="1"/><path d="M678 105.5 H688.5" stroke="#2f3238" stroke-width="1"/><path d="M678 110.5 H695.5" stroke="#2f3238" stroke-width="1"/><path d="M686.8 124.5 V114 M683.5 117 L686.8 113.5 L690 117" stroke="#1e88d5" stroke-width="1.2" fill="none"/><path d="M711 110.5 H728.5" stroke="#2f3238" stroke-width="1"/><path d="M711 113.5 H722" stroke="#2f3238" stroke-width="1"/><path d="M719.5 101 V108.5 M716.3 105.5 L719.5 108.5 L722.7 105.5 M719.5 124.5 V116 M716.3 119 L719.5 116 L722.7 119" stroke="#1e88d5" stroke-width="1.2" fill="none"/><rect x="737.5" y="96" width="30.5" height="32.5" rx="3" fill="#5294e2" stroke="#2b2e39" stroke-width="1"/><path d="M752.5 101 V110 M749 106.8 L752.5 110.2 L756 106.8" stroke="#1f8fd6" stroke-width="1.2" fill="none"/><path d="M744 113.5 H755" stroke="#2b2e39" stroke-width="1.1"/><path d="M744 118.5 H761.5" stroke="#2b2e39" stroke-width="1.1"/><path d="M744 121.5 H755" stroke="#2b2e39" stroke-width="1.1"/><path d="M788 117 H781.5 V104.5 H798.5 V113" stroke="#2f3238" stroke-width="1.2" fill="none"/><circle cx="792.3" cy="110.5" r="2.6" fill="#2f3238"/><path d="M786 115.5 H790 V122 H786 Z M792 115.5 H797 V122 H792 Z M798.5 115.5 H803 V122 H798.5 Z M786 118.8 H803" stroke="#2f3238" stroke-width="1" fill="none"/><path d="M811.3 111.5 H818.3 L814.8 115.5 Z" fill="#e8ebef"/><text x="839" y="121" font-size="20" text-anchor="middle" fill="#2f3238" font-family="Liberation Sans">%</text><text x="871" y="121" font-size="19" text-anchor="middle" fill="#2f3238" font-family="Liberation Sans" letter-spacing="-1.5">0.0</text><path d="M894 104.5 H913 V121.5 H894 Z M894 107 H913 M897.5 102.5 V105 M909.5 102.5 V105 M902 112 H907 L903.5 119" stroke="#2f3238" stroke-width="1" fill="none"/><text x="944" y="120.5" font-size="18" text-anchor="middle" fill="#2f3238" font-family="Liberation Sans" letter-spacing="-1.5">.00</text><path d="M950.5 115.5 V124 M946.3 119.5 H955" stroke="#1e88d5" stroke-width="1.2"/><text x="977" y="120.5" font-size="18" text-anchor="middle" fill="#2f3238" font-family="Liberation Sans" letter-spacing="-1.5">.00</text><path d="M979.5 113.5 L989 123 M989 113.5 L979.5 123" stroke="#e53935" stroke-width="1.2"/><path d="M1011.5 101.5 H1030.0" stroke="#2f3238" stroke-width="1"/><path d="M1019.5 106.5 H1030.0" stroke="#2f3238" stroke-width="1"/><path d="M1019.5 111.5 H1030.0" stroke="#2f3238" stroke-width="1"/><path d="M1019.5 116.5 H1030.0" stroke="#2f3238" stroke-width="1"/><path d="M1011.5 121.5 H1030.0" stroke="#2f3238" stroke-width="1"/><path d="M1008.3 111.5 H1017.5 M1013.8 107.5 L1017.8 111.5 L1013.8 115.5" stroke="#1e88d5" stroke-width="1.2" fill="none"/><path d="M1044.5 101.5 H1063.0" stroke="#2f3238" stroke-width="1"/><path d="M1052.5 106.5 H1063.0" stroke="#2f3238" stroke-width="1"/><path d="M1052.5 111.5 H1063.0" stroke="#2f3238" stroke-width="1"/><path d="M1052.5 116.5 H1063.0" stroke="#2f3238" stroke-width="1"/><path d="M1044.5 121.5 H1063.0" stroke="#2f3238" stroke-width="1"/><path d="M1050.5 111.5 H1041.3 M1045 107.5 L1041 111.5 L1045 115.5" stroke="#1e88d5" stroke-width="1.2" fill="none"/><rect x="1081.5" y="103" width="18.5" height="18.5" fill="#f8f8f8" stroke="#2b2d33" stroke-width="1"/><path d="M1090.8 103 V121.5 M1081.5 112.3 H1100" stroke="#555" stroke-width="1"/><path d="M1081 121.8 H1100.5" stroke="#f08a24" stroke-width="1.3"/><path d="M1110.3 111.5 H1117.3 L1113.8 115.5 Z" fill="#e8ebef"/><path d="M1126.7 103.5 H1144 M1126.7 109 H1144" stroke="#2f3238" stroke-width="2"/><path d="M1126.7 113.5 H1144 M1126.7 121.5 H1144" stroke="#2f3238" stroke-width="1.2" stroke-dasharray="3 2"/><path d="M1126.7 117.5 H1144 " stroke="#2f3238" stroke-width="1" stroke-dasharray="1.5 2"/><path d="M1154.2 111.5 H1161.2 L1157.7 115.5 Z" fill="#e8ebef"/><rect x="1169" y="102.5" width="19.5" height="15" fill="#383c4a" stroke="#f8f8f8" stroke-width="1.8"/><rect x="1168" y="101.5" width="21.5" height="17" fill="none" stroke="#1e88d5" stroke-width="1"/><rect x="1167" y="118.5" width="24.5" height="6" fill="#2a62a0"/><path d="M1197.8 111.5 H1204.8 L1201.3 115.5 Z" fill="#e8ebef"/><rect x="1221" y="102" width="19" height="19.5" fill="#000"/><rect x="1222.3" y="103.3" width="3.2" height="3.4" fill="#f8f8f8"/><rect x="1226.8" y="103.3" width="9" height="3.4" fill="#a8e0a8"/><rect x="1237" y="103.3" width="2.5" height="3.4" fill="#f8f8f8"/><rect x="1222.3" y="107.89999999999999" width="3.2" height="3.4" fill="#f8f8f8"/><rect x="1226.8" y="107.89999999999999" width="9" height="3.4" fill="#f4a0a8"/><rect x="1237" y="107.89999999999999" width="2.5" height="3.4" fill="#f8f8f8"/><rect x="1222.3" y="112.5" width="3.2" height="3.4" fill="#f8f8f8"/><rect x="1226.8" y="112.5" width="9" height="3.4" fill="#a8e0a8"/><rect x="1237" y="112.5" width="2.5" height="3.4" fill="#f8f8f8"/><rect x="1222.3" y="117.1" width="3.2" height="3.4" fill="#f8f8f8"/><rect x="1226.8" y="117.1" width="9" height="3.4" fill="#f4a0a8"/><rect x="1237" y="117.1" width="2.5" height="3.4" fill="#f8f8f8"/><path d="M1226.3 102.5 V122 M1235.8 102.5 V122" stroke="#2ea043" stroke-width="1"/><rect x="1230" y="111" width="11.5" height="11.5" fill="#f8f8f8" stroke="#2b2d33" stroke-width="1"/><path d="M1232.5 115 H1239 M1232.5 118.5 H1239 M1238 112.8 L1233.5 120.8" stroke="#2b2d33" stroke-width="1"/><path d="M1249.7 111.5 H1256.7 L1253.2 115.5 Z" fill="#e8ebef"/><text x="191.5" y="154" font-size="19" font-style="italic" text-anchor="middle" fill="#1e88d5" font-family="Liberation Serif">fx</text><path d="M220.5 139.5 H209 L214.5 148 L209 156.5 H220.5" stroke="#2f3238" stroke-width="1" fill="none"/><path d="M230.3 146.5 H237.3 L233.8 150.5 Z" fill="#e8ebef"/><path d="M246.5 145.5 H259.5 M246.5 151.5 H259.5" stroke="#2f3238" stroke-width="1.2"/><path d="M1305 171 H1327" stroke="#2b2e39" stroke-width="1"/><rect x="1307" y="182" width="18" height="18" fill="#f8f8f8"/><rect x="1307" y="182" width="18" height="2.2" fill="#76746c"/><path d="M1309.5 189.5 H1322.5 M1309.5 193.5 H1322.5" stroke="#333" stroke-width="1"/><circle cx="1318.5" cy="189.5" r="1.7" fill="#1e88d5"/><circle cx="1312.5" cy="193.5" r="1.7" fill="#1e88d5"/><path d="M1307 231 L1312 216 L1317 231 M1308.8 226 H1315.2" stroke="#2f3238" stroke-width="1.1" fill="none"/><path d="M1326 222 L1318 230" stroke="#f8f8f8" stroke-width="2.2"/><path d="M1318.5 229 Q1315 229 1311.5 236 Q1318 235 1319.5 231 Z" fill="#1e88d5"/><path d="M1305.5 268.5 V251.5 H1311 L1313 253.5 H1323.5 V258" fill="#f8d98e" stroke="#f08a24" stroke-width="1"/><path d="M1305.5 268.5 L1307.5 257.5 H1326 V268.5 Z" fill="#f8d98e" stroke="#f08a24" stroke-width="1"/><rect x="1313.5" y="258.5" width="13" height="12" fill="#f8f8f8" stroke="#2b2d33" stroke-width="1"/><path d="M1314 270 L1318 266 L1320 267.5 L1326 263 V270 Z" fill="#90caf9" stroke="#1e88d5" stroke-width=".8"/><circle cx="1317" cy="262" r="1.2" fill="#f08a24"/><circle cx="1316" cy="296" r="9" fill="#f8f8f8"/><path d="M1321 291 L1317.5 298 L1311 301 L1314.5 294 Z" fill="#1e88d5"/><circle cx="1316" cy="296" r="1.2" fill="#f8f8f8"/><text x="1316.5" y="337.5" font-size="24" font-style="italic" text-anchor="middle" fill="#1e88d5" font-family="Liberation Serif">fx</text><rect x="19" y="796" width="2" height="14" fill="#7c818c"/><path d="M28 796 V810 L21 803 Z" fill="#7c818c"/><path d="M50 796 V810 L41.5 803 Z" fill="#7c818c"/><path d="M64 796 V810 L72 803 Z" fill="#7c818c"/><path d="M85.5 796 V810 L93.5 803 Z" fill="#7c818c"/><rect x="94.5" y="796" width="2" height="14" fill="#7c818c"/><path d="M120.4 795.5 V810 M113 802.7 H127.8" stroke="#000" stroke-width="3"/><rect x="678.5" y="823.5" width="8" height="5" fill="#f8f8f8" stroke="#222" stroke-width=".8"/><path d="M689.5 821.5 H693.5 M689.5 830.5 H693.5 M691.5 821.5 V830.5" stroke="#32353d" stroke-width="1"/><path d="M710 820 H720 V830 H711 L710 829 Z" fill="#e02020"/><rect x="712" y="821" width="6" height="3" fill="#fff"/><rect x="712" y="825.5" width="6" height="4.5" fill="#fff"/><rect x="714" y="826.8" width="2" height="2" fill="#e02020"/><path d="M1155 826.3 H1162" stroke="#32353d" stroke-width="1.5"/><path d="M1268.5 826.3 H1277 M1272.7 822 V830.5" stroke="#32353d" stroke-width="1.5"/></svg>
</body></html>
